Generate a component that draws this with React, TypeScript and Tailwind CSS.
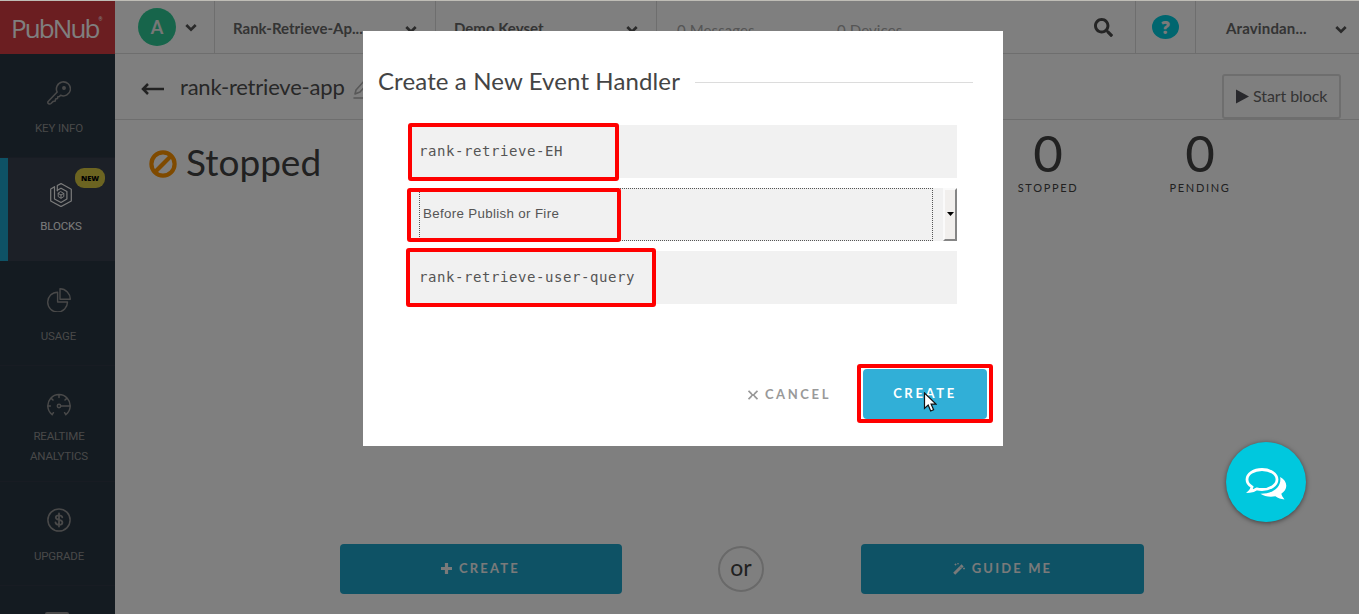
import React from "react";
import { FaSearch } from "react-icons/fa";

const stroke = { fill: "none", stroke: "currentColor", strokeLinecap: "round", strokeLinejoin: "round" } as const;

function Chevron() {
  return (
    <svg className="h-[9px] w-3 shrink-0 text-[#555]" viewBox="0 0 12 9">
      <path d="M1.3 2 6 6.7 10.7 2" fill="none" stroke="currentColor" strokeWidth="2.7" />
    </svg>
  );
}

function KeyIcon() {
  return (
    <svg className="size-6" viewBox="0 0 24 24" {...stroke} strokeWidth="1.5">
      <path d="M10.2 11.1A7 7 0 1 1 13.6 14.3L12.3 15.6 10.8 15.8 10.5 17.6 8.6 18 8.2 20 6.2 20.4 4 22.5C2.6 23.7.3 22.6.9 20.7Z" />
      <circle cx="17" cy="7" r="1.2" fill="currentColor" />
    </svg>
  );
}

function BlocksIcon() {
  return (
    <svg className="size-6" viewBox="0 0 24 24" {...stroke} strokeWidth="1.2">
      <path d="M5.5 3.9 1.7 6v12L12 23.6 22.3 18V6.3L12 .6 8.3 2.5v5.3" />
      <path d="M5.5 3.9v12L12 19.5l5.9-3.6V8.5L12 5.2 8.3 7.3" />
      <path d="m12 8.8 2.8 1.6v3.2L12 15.200l-2.800-1.600v-3.200ZM9.200 10.400 12 12l2.800-1.600M12 12v3.200" strokeWidth="1" />
    </svg>
  );
}

function UsageIcon() {
  return (
    <svg className="size-6" viewBox="0 0 24 24" {...stroke} strokeWidth="1.4">
      <path d="M10.6 4.2A9.9 9.9 0 1 0 20.5 14H10.6Z" />
      <path d="M13 .8v10.5h10.3A10.4 10.4 0 0 0 13 .8Z" />
    </svg>
  );
}

function GaugeIcon() {
  return (
    <svg className="size-6" viewBox="0 0 24 24" {...stroke} strokeWidth="1.5">
      <path d="M5.2 21.7A11.2 11.2 0 1 1 18.8 21.7M5.2 21.7l1.2-2M18.8 21.7l-1.2-2M1 13h2.4M12 2v2.6M4.2 5.2l1.8 1.8M19.8 5.2 18 7M14 13h9" />
      <circle cx="12" cy="13" r="1.7" />
    </svg>
  );
}

function DollarIcon() {
  return (
    <svg className="size-6" viewBox="0 0 24 24" {...stroke} strokeWidth="1.5">
      <circle cx="12" cy="12" r="11.1" />
      <path strokeWidth="1.8" d="M12 5.5v13M15.3 9.3C15 7.9 13.6 7.3 12 7.3c-1.9 0-3.2.9-3.2 2.3 0 3.3 6.6 1.4 6.6 4.8 0 1.4-1.5 2.4-3.4 2.4-1.8 0-3.2-.8-3.5-2.3" />
    </svg>
  );
}

function WandIcon() {
  return (
    <svg className="mr-[7px] size-3 shrink-0" viewBox="0 0 12 12">
      <path d="M1.200 10.800 9.600 2.400" stroke="currentColor" strokeWidth="2.900" />
      <path d="m7 3.600 1.500 1.500" stroke="#1ca4ca" strokeWidth=".6" />
      <path d="M2.5.5v2M1.5 1.5h2M5 0v1.4M4.3.7h1.4M11 4.5v2M10 5.5h2" stroke="currentColor" strokeWidth=".8" />
    </svg>
  );
}

function NavItem({ icon, label, className }: { icon: React.ReactNode; label: React.ReactNode; className: string }) {
  return (
    <div className={"flex shrink-0 flex-col items-center border-b border-[#303946] text-center leading-5 " + className}>
      {icon}
      <span className="mt-[13px]">{label}</span>
    </div>
  );
}

function Sidebar() {
  return (
    <aside className="flex w-[115px] shrink-0 flex-col overflow-hidden bg-[#283642] font-['Roboto'] text-[11.5px] tracking-[-0.15px] text-[#929292]">
      <div className="flex h-[53px] shrink-0 items-center bg-[#d63c42] pl-[11px] text-white">
        <span className="font-['Open_Sans'] text-[26px] leading-none font-medium tracking-[-1.9px]">PubNub</span>
        <span className="-mt-4 text-[5px]">®</span>
      </div>
      <NavItem icon={<KeyIcon />} label="KEY INFO" className="h-[104px] pt-[27px] pl-[3px]" />
      <div className="relative h-[103px] shrink-0 border-l-8 border-[#1ca4ca] bg-[#38404e] pt-[25px] text-center text-[#f5f5f5]">
        <div className="flex justify-center pr-[2px]"><BlocksIcon /></div>
        <span className="mt-[9px] block pr-[1px] leading-5">BLOCKS</span>
        <span className="absolute top-[10px] right-[10px] flex h-5 w-[30px] items-center justify-center rounded-[9px] bg-[#d8c842] pt-px font-['Open_Sans'] text-[7.5px] font-extrabold tracking-normal text-black">NEW</span>
      </div>
      <NavItem icon={<UsageIcon />} label="USAGE" className="h-[105px] pt-[27px] pl-[2px] [&>span]:mt-[14px]" />
      <NavItem icon={<GaugeIcon />} label={<>REALTIME<br />ANALYTICS</>} className="h-[116px] pt-[27px] pl-[3px] [&>span]:mt-[9px]" />
      <NavItem icon={<DollarIcon />} label="UPGRADE" className="h-[104px] pt-[26px] pl-[3px] [&>span]:mt-[14px]" />
      <div className="mt-[26px] ml-[45px] h-6 w-6 rounded-sm border-2 border-current" />
    </aside>
  );
}

function Header() {
  return (
    <header className="flex h-[53px] shrink-0 border-b border-[#dcdcdc] text-[15px] font-bold text-[#686868]">
      <div className="flex w-[100px] items-center border-r border-[#dcdcdc] pl-[23px]">
        <span className="flex size-[38px] items-center justify-center rounded-full bg-[#2ecb96] text-[18px] text-[#eee]">A</span>
        <span className="ml-[9px] flex"><Chevron /></span>
      </div>
      <div className="flex w-[221px] items-center justify-between border-r border-[#dcdcdc] pt-[3px] pr-[18px] pl-[18px]">
        <span>Rank-Retrieve-Ap...</span><span className="mt-px"><Chevron /></span>
      </div>
      <div className="flex w-[221px] items-center justify-between border-r border-[#dcdcdc] pt-[3px] pr-[18px] pl-[18px]">
        <span>Demo Keyset</span><span className="mt-px"><Chevron /></span>
      </div>
      <div className="flex flex-1 items-center pt-[7px] pr-[22px] pl-5 font-normal tracking-[0.1px] text-[#aaa]">
        <span className="w-[160px]">0 Messages</span><span>0 Devices</span>
        <FaSearch className="-mt-[7px] ml-auto size-[19px] text-[#4a4a4a]" />
      </div>
      <div className="flex w-[60px] items-center justify-center border-l border-[#dcdcdc]">
        <span className="flex h-6 w-[27px] items-center justify-center rounded-[50%] bg-[#00ccdf] font-['Open_Sans'] text-[17px] leading-none font-extrabold text-[#f4f4f4]">?</span>
      </div>
      <div className="flex w-[164px] items-center justify-between border-l border-[#dcdcdc] pt-[3px] pr-3 pl-[30px]">
        <span className="tracking-[0.15px]">Aravindan...</span><span className="mt-px"><Chevron /></span>
      </div>
    </header>
  );
}

function Count({ label }: { label: string }) {
  return (
    <div className="flex w-[152px] flex-col items-center text-[#424242]">
      <span className="text-[51px] leading-[50px]">0</span>
      <span className="mt-[2px] text-[11px] leading-4 tracking-[1.7px]">{label}</span>
    </div>
  );
}

function Page() {
  return (
    <main className="flex min-w-0 flex-1 flex-col bg-white">
      <Header />
      <div className="flex h-[66px] shrink-0 items-center border-b border-[#dcdcdc] pr-[18px] pl-[26px] text-[#505050]">
        <svg className="mt-[5px] h-4 w-6" viewBox="0 0 24 16"><path d="M7 3 2 8l5 5M2 8h21" fill="none" stroke="#444" strokeWidth="2.5" /></svg>
        <span className="ml-[15px] text-[22px] tracking-[-0.2px]">rank-retrieve-app</span>
        <svg className="mt-1 ml-2 size-5 text-[#b0b0b0]" viewBox="0 0 20 20" {...stroke} strokeWidth="1.6">
          <path d="m3 11 9-10 4 2-9 10-5 2ZM1 19h18" />
        </svg>
        <div className="mt-5 ml-auto flex h-[45px] w-[119px] items-center rounded-[3px] border-2 border-[#dcdcdc] pb-px pl-[12px] text-base text-[#686868]">
          <svg className="mt-px mr-[4px] h-[15px] w-[13px]" viewBox="0 0 13 15"><path d="M0 .5v14l13-7Z" fill="#505058" /></svg>
          <span className="tracking-[-0.08px]">Start block</span>
        </div>
      </div>
      <div className="flex h-[90px] shrink-0 justify-between pl-[34px] text-[#424242]">
        <div className="flex h-[87px] items-center">
          <svg className="h-[28px] w-[28px]" viewBox="0 0 28 28" fill="none" stroke="#ff9400" strokeWidth="4.2"><circle cx="14" cy="14" r="11.6" /><path d="m5.8 22.2 16.4-16.4" /></svg>
          <span className="-mt-1 ml-[9px] text-[37px]">Stopped</span>
        </div>
        <div className="flex pt-[8px] pr-[83px]"><Count label="STOPPED" /><Count label="PENDING" /></div>
      </div>
      <div className="mt-auto mb-5 flex items-center pl-[225px] text-[13px] font-bold tracking-[2.2px] text-[#f4f4f4]">
        <div className="flex h-[50px] w-[282px] items-center justify-center rounded-sm bg-[#1ca4ca] pr-px">
          <svg className="mr-[7px] mb-[2px] size-[11px]" viewBox="0 0 11 11"><path d="M5.5 0v11M0 5.5h11" stroke="currentColor" strokeWidth="3.2" /></svg>CREATE
        </div>
        <div className="mr-[97px] ml-[96px] flex size-[46px] items-center justify-center rounded-full border-2 border-[#d2d2d2] text-[23px] font-normal tracking-normal text-[#424242]"><span className="-mt-1">or</span></div>
        <div className="flex h-[50px] w-[283px] items-center justify-center rounded-sm bg-[#1ca4ca] tracking-[2.15px]"><WandIcon />GUIDE ME</div>
      </div>
    </main>
  );
}

function Modal() {
  return (
    <section className="absolute top-[31px] left-[363px] h-[415px] w-[640px] bg-white">
      <div className="flex h-[94px] items-center pt-2 pr-[30px] pl-[15px]">
        <h1 className="-mt-[2px] text-[24px] tracking-[0.12px] text-[#444]">Create a New Event Handler</h1>
        <div className="ml-[15px] h-px flex-1 bg-[#dcdcdc]" />
      </div>
      <div className="flex flex-col gap-[10px] pr-[46px] pl-[46px] font-['DejaVu_Sans_Mono'] text-[14px] tracking-[0.57px] text-[#555]">
        <div className="flex h-[53px] items-center bg-[#f1f1f1] pl-[10px]"><span>rank-retrieve-EH</span></div>
        <div className="flex h-[53px] bg-[#f1f1f1] pl-[10px]">
          <div className="flex w-[514px] items-center border border-dotted border-[#555] pb-[2px] pl-[3px] font-['Liberation_Sans'] text-[13.33px] tracking-[0.33px]">Before Publish or Fire</div>
          <div className="ml-auto flex w-[14px] items-center justify-center border-2 border-t-[#fafafa] border-r-[#858585] border-b-[#858585] border-l-[#fafafa] bg-[#f1efed] pb-[2px]">
            <svg className="h-[4px] w-[7px] shrink-0" viewBox="0 0 7 4"><path d="M0 0h7L3.5 4Z" /></svg>
          </div>
        </div>
        <div className="flex h-[53px] items-center bg-[#f1f1f1] pl-[10px]"><span>rank-retrieve-user-query</span></div>
      </div>
      <div className="mt-[65px] flex items-center justify-end pr-4 text-[13px] font-bold tracking-[2.5px]">
        <svg className="mt-[2px] mr-[7px] h-[10px] w-[10px] text-[#999]" viewBox="0 0 10 10"><path d="M.5.8 3.8 4.1M9.5.8 6.2 4.1M.5 9.2 3.8 5.9M9.5 9.2 6.2 5.9M3.3 5h3.4" fill="none" stroke="currentColor" strokeWidth="1.8" /></svg>
        <span className="mt-[2px] mr-[32px] tracking-[2.6px] text-[#999]">CANCEL</span>
        <div className="flex h-[50px] w-[124px] items-center justify-center rounded-sm bg-[#31afd7] text-white tracking-[2.65px]">CREATE</div>
      </div>
    </section>
  );
}

export default function App() {
  return (
    <div className="relative flex h-[614px] w-[1359px] flex-col overflow-hidden border-t border-[#bfbdb6] font-['Lato',sans-serif]">
      <div className="flex min-h-0 flex-1"><Sidebar /><Page /></div>
      <div className="absolute inset-0 bg-black/50" />
      <div className="absolute -top-px left-0 h-[614px] w-[1359px]">
        <Modal />
        <div className="absolute top-[123px] left-[408px] h-[58px] w-[211px] rounded-[3px] border-4 border-[#f00]" />
        <div className="absolute top-[188px] left-[407px] h-[54px] w-[214px] rounded-[3px] border-4 border-[#f00]" />
        <div className="absolute top-[248px] left-[406px] h-[59px] w-[250px] rounded-[3px] border-4 border-[#f00]" />
        <div className="absolute top-[364px] left-[857px] h-[59px] w-[136px] rounded-[3px] border-4 border-[#f00]" />
        <svg className="absolute top-[392px] left-[923px] h-[21px] w-[14px]" viewBox="0 0 14 21"><path d="M1.5 1v15.5l3.7-3.4 2.5 5.9 2.9-1.2-2.5-5.7h4.9Z" fill="#fff" stroke="#111" strokeWidth="1.2" /></svg>
        <div className="absolute top-[442px] left-[1226px] flex size-20 items-center justify-center rounded-full bg-[#00c8de] shadow-[0_1px_5px_rgba(0,0,0,0.5)]">
          <svg className="mt-1 h-8 w-[42px]" viewBox="0 0 42 32">
            <path d="M17 1.5c8.3 0 15 4.5 15 10s-6.7 10-15 10c-1.9 0-3.7-.2-5.3-.6-2 1.4-4.4 2.3-7 2.5 1.3-1.3 2-2.8 2.3-4.5C3.9 17.1 2 14.5 2 11.5c0-5.5 6.7-10 15-10Z" fill="none" stroke="#fff" strokeWidth="2.8" />
            <path d="M35.2 9c3.8 2.1 6.1 5.3 6.1 8.7 0 3.1-1.9 6-5 8 .4 1.8 1.5 3.3 3.2 5.8-3.7-.4-6.5-1.3-9.1-3.2-5.3 1.1-11 .2-15-2.5C26.5 26 36.8 20.5 35.2 9Z" fill="#fff" />
          </svg>
        </div>
      </div>
    </div>
  );
}
